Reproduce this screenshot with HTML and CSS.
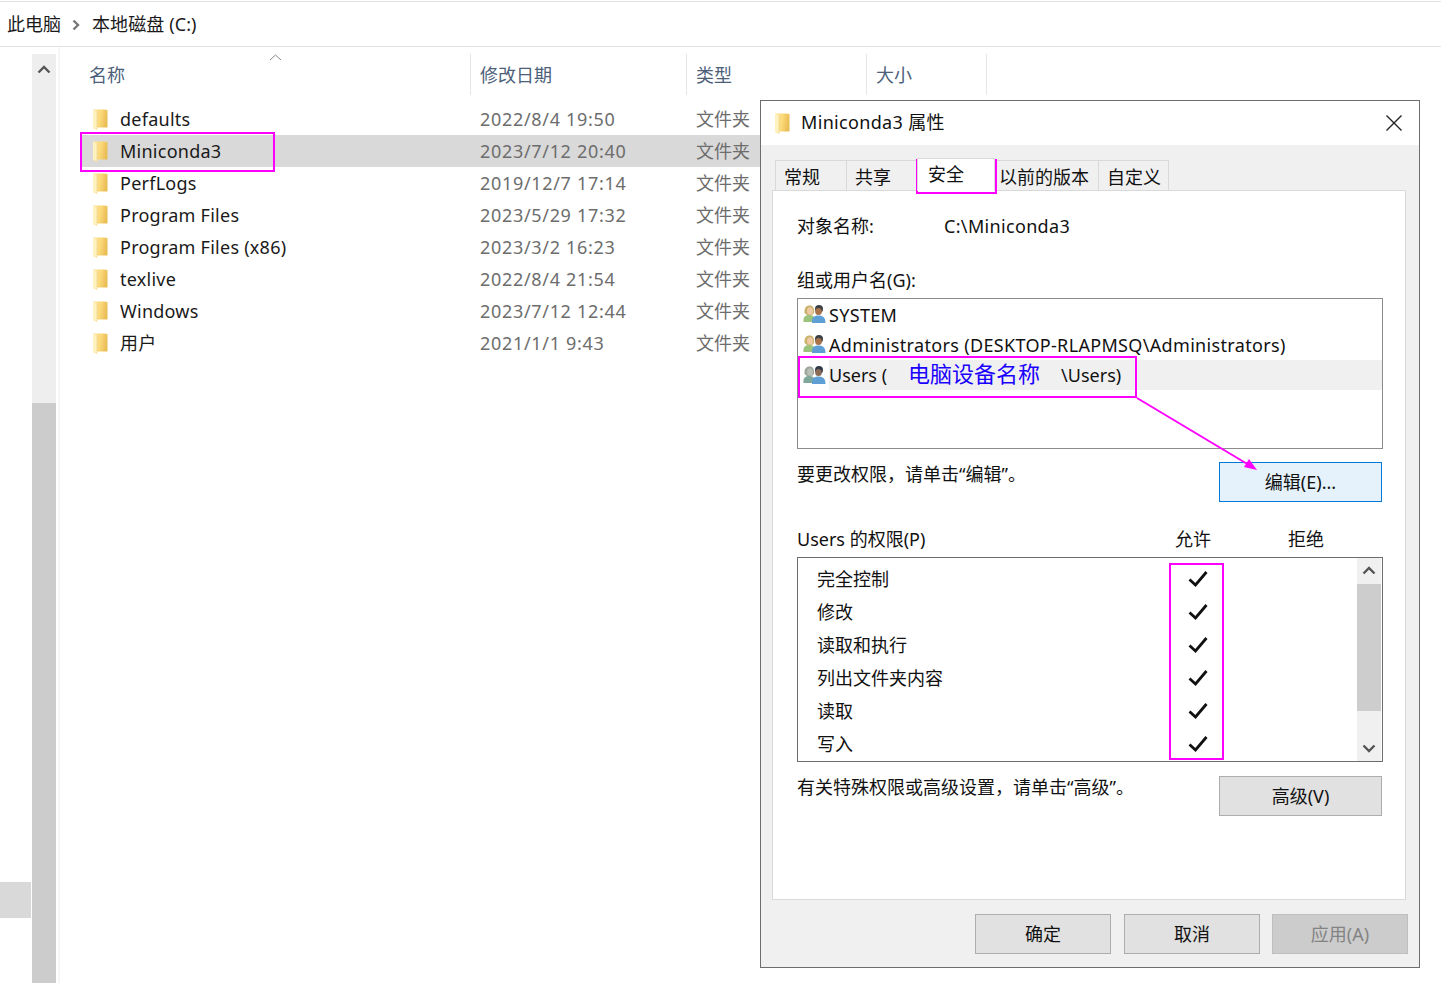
FILE: index.html
```html
<!DOCTYPE html>
<html lang="zh-CN">
<head>
    <meta charset="UTF-8">
    <title>本地磁盘 (C:)</title>
    <link rel="stylesheet" href="styles.css">
</head>
<body>
    <svg class="defs" width="0" height="0">
        <defs>
            <linearGradient id="folderGrad" x1="0" y1="0" x2="1" y2="0.2">
                <stop offset="0" stop-color="#fbe6a2"/>
                <stop offset="0.55" stop-color="#fbd978"/>
                <stop offset="1" stop-color="#e9bd55"/>
            </linearGradient>
            <symbol id="folder" viewBox="0 0 15 21">
                <path d="M0 0.500 H11 L14.500 1 V18.500 H4 V21 L0 19 Z" fill="url(#folderGrad)"/>
                <path d="M0 0.500 L4 2.500 V20.500 L0 18.500 Z" fill="#fff1c0"/>
                <path d="M4 2.500 V20.500" stroke="#ecd089" stroke-width="0.600"/>
            </symbol>
            <symbol id="users" viewBox="0 0 23 18">
                <path d="M1.500 8 C1 2 4 0.500 6.500 0.500 C10 0.500 11.500 3 11 8 L9 10 H4 Z" fill="#c9b26a"/>
                <ellipse cx="7" cy="6" rx="3" ry="3.800" fill="#eec9a4"/>
                <path d="M0.500 17 C0 12 2 10 6 10 C10 10 12 11 12 17 Z" fill="#9cc37c"/>
                <circle cx="16" cy="4" r="4" fill="#3c3f46"/>
                <ellipse cx="15.500" cy="6.500" rx="3.300" ry="3.500" fill="#a8714a"/>
                <path d="M9 18 C8.500 12.500 11 10.500 15.500 10.500 C20 10.500 22.500 12.500 22.500 18 Z" fill="#5e9fd6"/>
            </symbol>
            <symbol id="usersDim" viewBox="0 0 23 18">
                <path d="M1.500 8 C1 2 4 0.500 6.500 0.500 C10 0.500 11.500 3 11 8 L9 10 H4 Z" fill="#9da69a"/>
                <ellipse cx="7" cy="6" rx="3" ry="3.800" fill="#b9c0b8"/>
                <path d="M0.500 17 C0 12 2 10 6 10 C10 10 12 11 12 17 Z" fill="#7fa79a"/>
                <circle cx="16" cy="4" r="4" fill="#2f3a4a"/>
                <ellipse cx="15.500" cy="6.500" rx="3.300" ry="3.500" fill="#8a6a55"/>
                <path d="M9 18 C8.500 12.500 11 10.500 15.500 10.500 C20 10.500 22.500 12.500 22.500 18 Z" fill="#5e9fd6"/>
            </symbol>
            <symbol id="check" viewBox="0 0 22 18">
                <path d="M1.500 10.500 L7.500 16 L18.500 3" fill="none" stroke="#111" stroke-width="2.800"/>
            </symbol>
        </defs>
    </svg>

    <div class="breadcrumb">
        <span>此电脑</span>
        <svg class="crumb-arrow" width="8" height="12" viewBox="0 0 8 12"><path d="M1.500 1.500 L6 6 L1.500 10.500" fill="none" stroke="#777" stroke-width="2.400"/></svg>
        <span class="crumb-drive">本地磁盘 (C:)</span>
    </div>

    <div class="explorer">
        <div class="nav-pane"><div class="nav-tile"></div></div>
        <div class="nav-scroll">
            <div class="nav-scroll-btn">
                <svg width="14" height="9" viewBox="0 0 14 9"><path d="M1.500 7.500 L7 2 L12.500 7.500" fill="none" stroke="#555" stroke-width="2.400"/></svg>
            </div>
            <div class="nav-scroll-thumb"></div>
        </div>
        <div class="file-pane">
            <div class="file-header">
                <div class="col-name">
                    名称
                    <svg class="sort-arrow" width="13" height="7" viewBox="0 0 13 7"><path d="M1 6 L6.500 1 L12 6" fill="none" stroke="#8a8a8a"/></svg>
                </div>
                <div class="col-date">修改日期</div>
                <div class="col-type">类型</div>
                <div class="col-size">大小</div>
            </div>
            <div class="file-list">
                <div class="file-row"><div class="col-name"><svg class="folder"><use href="#folder"/></svg>defaults</div><div class="col-date">2022/8/4 19:50</div><div class="col-type">文件夹</div></div>
                <div class="file-row selected"><div class="col-name"><svg class="folder"><use href="#folder"/></svg>Miniconda3</div><div class="col-date">2023/7/12 20:40</div><div class="col-type">文件夹</div></div>
                <div class="file-row"><div class="col-name"><svg class="folder"><use href="#folder"/></svg>PerfLogs</div><div class="col-date">2019/12/7 17:14</div><div class="col-type">文件夹</div></div>
                <div class="file-row"><div class="col-name"><svg class="folder"><use href="#folder"/></svg>Program Files</div><div class="col-date">2023/5/29 17:32</div><div class="col-type">文件夹</div></div>
                <div class="file-row"><div class="col-name"><svg class="folder"><use href="#folder"/></svg>Program Files (x86)</div><div class="col-date">2023/3/2 16:23</div><div class="col-type">文件夹</div></div>
                <div class="file-row"><div class="col-name"><svg class="folder"><use href="#folder"/></svg>texlive</div><div class="col-date">2022/8/4 21:54</div><div class="col-type">文件夹</div></div>
                <div class="file-row"><div class="col-name"><svg class="folder"><use href="#folder"/></svg>Windows</div><div class="col-date">2023/7/12 12:44</div><div class="col-type">文件夹</div></div>
                <div class="file-row"><div class="col-name"><svg class="folder"><use href="#folder"/></svg>用户</div><div class="col-date">2021/1/1 9:43</div><div class="col-type">文件夹</div></div>
            </div>
        </div>
    </div>

    <!-- 属性窗口 -->
    <div class="dialog">
        <div class="dialog-title">
            <svg class="folder"><use href="#folder"/></svg>
            <span class="latin">Miniconda3 属性</span>
            <svg class="close-x" width="18" height="18" viewBox="0 0 18 18"><path d="M1.500 1.500 L16.500 16.500 M16.500 1.500 L1.500 16.500" stroke="#222" stroke-width="1.400"/></svg>
        </div>
        <div class="dialog-body">
            <div class="tabs">
                <div class="tab tab-1">常规</div>
                <div class="tab tab-2">共享</div>
                <div class="tab tab-active">安全</div>
                <div class="tab tab-4">以前的版本</div>
                <div class="tab tab-5">自定义</div>
            </div>
            <div class="panel">
                <div class="object-row"><span class="object-label">对象名称:</span><span class="latin">C:\Miniconda3</span></div>
                <div class="group-label">组或用户名(G):</div>
                <div class="user-box">
                    <div class="user-row"><svg class="users"><use href="#users"/></svg><span class="user-text latin">SYSTEM</span></div>
                    <div class="user-row"><svg class="users"><use href="#users"/></svg><span class="user-text latin">Administrators (DESKTOP-RLAPMSQ\Administrators)</span></div>
                    <div class="user-row user-selected"><svg class="users"><use href="#usersDim"/></svg><span class="user-text">Users (<span class="device-name">电脑设备名称</span>\Users)</span></div>
                </div>
                <div class="hint-row">
                    <span class="hint-edit">要更改权限，请单击“编辑”。</span>
                    <button class="btn btn-edit">编辑(E)...</button>
                </div>
                <div class="perm-head">
                    <span class="perm-title">Users 的权限(P)</span>
                    <span class="perm-allow">允许</span>
                    <span class="perm-deny">拒绝</span>
                </div>
                <div class="perm-box">
                    <div class="perm-list">
                        <div class="perm-row"><span>完全控制</span><svg class="check"><use href="#check"/></svg></div>
                        <div class="perm-row"><span>修改</span><svg class="check"><use href="#check"/></svg></div>
                        <div class="perm-row"><span>读取和执行</span><svg class="check"><use href="#check"/></svg></div>
                        <div class="perm-row"><span>列出文件夹内容</span><svg class="check"><use href="#check"/></svg></div>
                        <div class="perm-row"><span>读取</span><svg class="check"><use href="#check"/></svg></div>
                        <div class="perm-row"><span>写入</span><svg class="check"><use href="#check"/></svg></div>
                    </div>
                    <div class="perm-scroll">
                        <div class="perm-scroll-btn"><svg width="14" height="9" viewBox="0 0 14 9"><path d="M1.500 7.500 L7 2 L12.500 7.500" fill="none" stroke="#555" stroke-width="2.400"/></svg></div>
                        <div class="perm-scroll-thumb"></div>
                        <div class="perm-scroll-btn"><svg width="14" height="9" viewBox="0 0 14 9"><path d="M1.500 1.500 L7 7 L12.500 1.500" fill="none" stroke="#555" stroke-width="2.400"/></svg></div>
                    </div>
                </div>
                <div class="hint-row hint-row-adv">
                    <span class="hint-adv">有关特殊权限或高级设置，请单击“高级”。</span>
                    <button class="btn">高级(V)</button>
                </div>
            </div>
            <div class="dialog-footer">
                <button class="btn btn-foot">确定</button>
                <button class="btn btn-foot">取消</button>
                <button class="btn btn-foot btn-disabled">应用(A)</button>
            </div>
        </div>
    </div>

    <!-- 标注 -->
    <div class="mark mark-folder"></div>
    <div class="mark mark-tab"></div>
    <div class="mark mark-user"></div>
    <div class="mark mark-checks"></div>
    <svg class="mark-arrow" width="130" height="80" viewBox="0 0 130 80">
        <path d="M1 1 L118 71" stroke="#ff00ff" stroke-width="2" fill="none"/>
        <path d="M121 73 L108 70 L113 62 Z" fill="#ff00ff"/>
    </svg>
</body>
</html>
```

FILE: styles.css
```css
* { box-sizing: border-box; }
html, body { margin: 0; height: 100%; }
body { position: relative; width: 1441px; height: 983px; overflow: hidden; background: #fff; color: #1a1a1a; font-family: "Noto Sans", "Noto Sans CJK SC", sans-serif; font-size: 18px; line-height: 24px; }
.defs { position: absolute; }
.latin { letter-spacing: .33px; }

.breadcrumb { height: 46px; margin-top: 1px; padding-left: 7px; display: flex; align-items: center; gap: 11px; border-top: 1px solid #e3e3e3; border-bottom: 1px solid #e3e3e3; }
.crumb-arrow { margin-top: 1px; }
.crumb-drive { margin-left: 1px; letter-spacing: .1px; }

.explorer { display: flex; height: 936px; }
.nav-pane { width: 32px; padding-top: 835px; }
.nav-tile { width: 31px; height: 36px; background: #d9d9d9; }
.nav-scroll { width: 24px; margin-top: 7px; background: #eeeeee; display: flex; flex-direction: column; }
.nav-scroll-btn { height: 30px; display: flex; align-items: center; justify-content: center; }
.nav-scroll-thumb { margin-top: 319px; flex: 1; background: #cccccc; }

.file-pane { margin-left: 2px; padding-left: 20px; border-left: 2px solid #f6f6f6; flex: 1; }
.file-header { display: flex; height: 41px; margin-top: 7px; color: #4c607a; }
.file-header > div { border-right: 1px solid #e5e5e5; padding-left: 9px; line-height: 43px; }
.file-header .col-name { position: relative; width: 391px; }
.file-header .col-date { width: 216px; }
.file-header .col-type { width: 180px; }
.file-header .col-size { width: 120px; }
.sort-arrow { position: absolute; left: 189px; top: 0; }

.file-list { margin-top: 8px; }
.file-row { display: flex; width: 700px; height: 32px; line-height: 32px; }
.file-row.selected { background: #d9d9d9; }
.file-row .col-name { width: 390px; padding-left: 13px; display: flex; align-items: center; letter-spacing: .25px; }
.file-row .col-date { width: 216px; padding-left: 10px; color: #6d6d6d; letter-spacing: .68px; }
.file-row .col-type { width: 94px; padding-left: 10px; color: #6d6d6d; }
.folder { width: 15px; height: 21px; flex: none; margin-right: 12px; }

/* 属性窗口 */
.dialog { position: absolute; left: 760px; top: 100px; width: 660px; height: 868px; background: #f0f0f0; border: 1px solid #6d6d6d; display: flex; flex-direction: column; }
.dialog-title { height: 44px; flex: none; background: #fff; display: flex; align-items: center; padding-left: 14px; color: #111; }
.dialog-title .folder { margin-right: 11px; }
.dialog-title .latin { margin-top: -3px; }
.close-x { margin-left: auto; margin-right: 16px; }
.dialog-body { flex: 1; position: relative; padding: 15px 11px 0 11px; display: flex; flex-direction: column; }

.tabs { display: flex; height: 30px; position: relative; color: #111; }
.tab { height: 30px; border: 1px solid #d9d9d9; border-bottom: none; background: #f0f0f0; line-height: 33px; padding-left: 8px; }
.tab-1 { width: 72px; margin-left: 3px; }
.tab-2 { width: 70px; border-left: none; }
.tab-active { width: 78px; margin-top: -2px; height: 33px; background: #fff; line-height: 30px; padding-left: 10px; position: relative; z-index: 1; }
.tab-4 { width: 104px; border-left: none; padding-left: 4px; }
.tab-5 { width: 70px; border-left: none; }

.panel { width: 634px; height: 710px; background: #fff; border: 1px solid #d9d9d9; padding: 0 22px 0 24px; color: #111; }
.object-row { display: flex; margin-top: 23px; }
.object-label { width: 147px; }
.group-label { margin-top: 30px; }
.user-box { width: 586px; height: 151px; margin-top: 6px; border: 1px solid #8c8c8c; padding-top: 1px; }
.user-row { height: 30px; display: flex; align-items: center; padding-left: 5px; }
.users { width: 23px; height: 18px; flex: none; margin-right: 3px; margin-top: -3px; }
.user-selected .users { margin-top: 0; }
.user-text { line-height: 30px; flex: 1; }
.user-row .latin { margin-top: -1px; }
.user-selected .user-text { background: #f0f0f0; height: 30px; line-height: 26px; }
.device-name { color: #1a00ff; font-size: 22px; margin: 0 21px; }

.hint-row { display: flex; justify-content: space-between; width: 585px; }
.user-box + .hint-row { margin-top: 13px; }
.hint-adv { margin-top: -1px; }
.btn { width: 163px; height: 40px; padding: 0; background: #e1e1e1; border: 1px solid #adadad; color: #111; font: inherit; }
.btn-edit { background: #e5f1fb; border-color: #0078d7; }

.perm-head { position: relative; height: 24px; margin-top: 25px; }
.perm-allow { position: absolute; left: 378px; top: 0; }
.perm-deny { position: absolute; left: 491px; top: 0; }
.perm-box { display: flex; width: 586px; height: 205px; margin-top: 6px; border: 1px solid #6d6d6d; }
.perm-list { flex: 1; padding-top: 4px; }
.perm-row { height: 33px; padding-left: 19px; position: relative; display: flex; align-items: center; }
.check { position: absolute; left: 390px; top: 7px; width: 22px; height: 18px; }
.perm-scroll { width: 24px; background: #f0f0f0; display: flex; flex-direction: column; margin-right: 1px; }
.perm-scroll-btn { height: 26px; display: flex; align-items: center; justify-content: center; }
.perm-scroll-thumb { height: 128px; background: #cdcdcd; margin-bottom: 24px; }
.hint-row-adv { margin-top: 14px; }

.dialog-footer { display: flex; gap: 13px; margin-top: 14px; margin-left: 203px; }
.btn-foot { width: 136px; }
.btn-disabled { background: #cccccc; border-color: #bfbfbf; color: #838383; margin-left: -1px; }

/* 标注 */
.mark { position: absolute; border: 2px solid #ff00ff; }
.mark-folder { left: 80px; top: 132px; width: 195px; height: 40px; }
.mark-tab { left: 916px; top: 159px; width: 81px; height: 35px; }
.mark-user { left: 798px; top: 356px; width: 339px; height: 42px; }
.mark-checks { left: 1169px; top: 563px; width: 55px; height: 197px; }
.mark-arrow { position: absolute; left: 1136px; top: 397px; }
```
